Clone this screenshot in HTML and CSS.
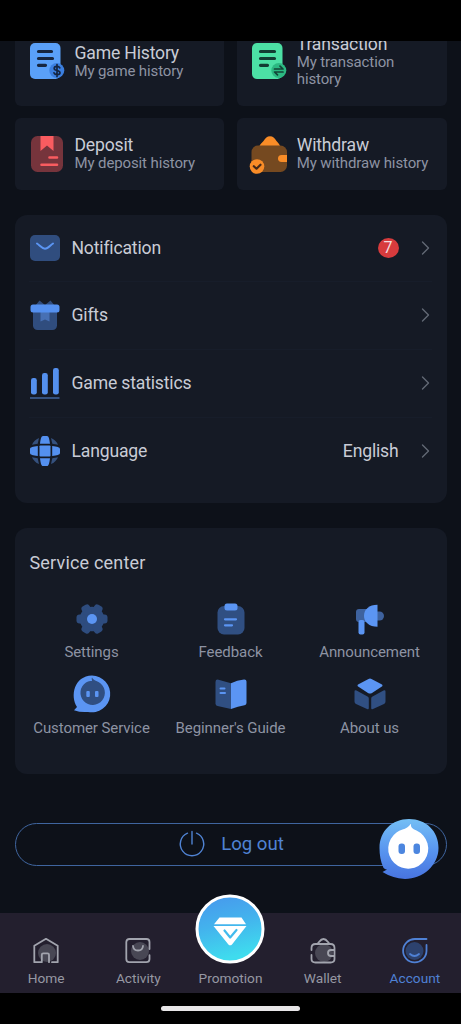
FILE: index.html
```html
<!DOCTYPE html>
<html lang="en">
<head>
<meta charset="utf-8">
<title>Account</title>
<link rel="stylesheet" href="styles.css">
</head>
<body>
<div class="screen">
  <div class="status-bar"></div>
  <main class="content">
    <section class="history">
      <a class="card tall">
        <svg class="card-icon" viewBox="0 0 40 40"><rect x="2" y="2" width="30.500" height="36" rx="5" fill="#5aa0f8"/><path d="M10.500 10.500h13M10.500 17.500h14M10.500 24.300h7" stroke="#17263f" stroke-width="3.200" stroke-linecap="round"/><circle cx="28.800" cy="29.500" r="7.500" fill="#3b7fe0"/><path d="M31.800 26.800c-1-2-5.600-2-5.600.6 0 2.600 5.800 1.600 5.800 4.300 0 2.500-5 2.500-6 .2M29 23.500v12" fill="none" stroke="#142541" stroke-width="1.700" stroke-linecap="round"/></svg>
        <div class="card-text"><h3>Game History</h3><p>My game history</p></div>
      </a>
      <a class="card tall">
        <svg class="card-icon" viewBox="0 0 40 40"><rect x="2" y="2" width="30.500" height="36" rx="5" fill="#4ce0a5"/><path d="M10.500 10.500h14M10.500 17.500h14M10.500 24.300h7" stroke="#133c33" stroke-width="3.200" stroke-linecap="round"/><circle cx="28.800" cy="29.500" r="7.500" fill="#2cb982"/><path d="M24.500 28h8.500l-3-2.800M33 31h-8.500l3 2.800" fill="none" stroke="#124437" stroke-width="1.700" stroke-linecap="round" stroke-linejoin="round"/></svg>
        <div class="card-text"><h3>Transaction</h3><p>My transaction history</p></div>
      </a>
      <a class="card">
        <svg class="card-icon" viewBox="0 0 40 40"><rect x="3" y="2" width="32" height="36" rx="6.500" fill="#76343c"/><path d="M12.500 2H25.500V17L19 11.500 12.500 17Z" fill="#fa5c60"/><path d="M21.500 23.500h7.500M13.500 30.700h15.500" stroke="#fa5c60" stroke-width="2.600" stroke-linecap="round"/></svg>
        <div class="card-text"><h3>Deposit</h3><p>My deposit history</p></div>
      </a>
      <a class="card">
        <svg class="card-icon" viewBox="1 0 40 40"><path d="M10.500 12c.5-2 2.500-3 4-5 2-3 3.500-4.800 6.500-4.800s4.500 1.800 6.500 4.800c1.500 2 3 3 3.500 5Z" fill="#f98c27"/><rect x="2.500" y="11.500" width="35.500" height="26.500" rx="6.500" fill="#754920"/><path d="M38 21h-5.500a3.500 3.500 0 0 0 0 7H38Z" fill="#f98c27"/><circle cx="8" cy="32.500" r="7.300" fill="#f98c27"/><path d="m4.800 32.200 2.700 2.500 4-4" fill="none" stroke="#442919" stroke-width="2.200" stroke-linecap="round" stroke-linejoin="round"/></svg>
        <div class="card-text"><h3>Withdraw</h3><p>My withdraw history</p></div>
      </a>
    </section>

    <section class="panel menu">
      <a class="menu-row">
        <svg class="menu-icon" viewBox="0 0 32 32"><rect x="1" y="3" width="30" height="26" rx="5" fill="#304d7e"/><path d="M8 11.500c3 2 5 5.200 8 5.200s5-3.200 8-5.200" fill="none" stroke="#5b95f3" stroke-width="2" stroke-linecap="round"/></svg>
        <span class="menu-label">Notification</span><span class="badge">7</span>
        <svg class="chevron" viewBox="0 0 10 16"><path d="m1.500 2 6 6-6 6"/></svg>
      </a>
      <a class="menu-row">
        <svg class="menu-icon" viewBox="0 0 32 32"><path d="M6 7 10.500 1.500 16 6l5.500-4.500L26 7Z" fill="#304d7e"/><path d="M4 9h24v17.500a4.500 4.500 0 0 1-4.500 4.500h-15A4.500 4.500 0 0 1 4 26.500Z" fill="#304d7e"/><path d="M11.500 12h9v10.500L16 20.500l-4.500 2Z" fill="#4770b4"/><rect x="1.500" y="5.500" width="29" height="8" rx="2.500" fill="#5490ef"/></svg>
        <span class="menu-label">Gifts</span>
        <svg class="chevron" viewBox="0 0 10 16"><path d="m1.500 2 6 6-6 6"/></svg>
      </a>
      <a class="menu-row">
        <svg class="menu-icon" viewBox="0 0 32 32"><g fill="#5490ef"><rect x="2" y="11" width="5.800" height="16.500" rx="2.300"/><rect x="13" y="6" width="5.800" height="21.500" rx="2.300"/><rect x="24" y="1" width="5.800" height="26.500" rx="2.300"/></g><rect x="1" y="30" width="29.500" height="2" fill="#35517e"/></svg>
        <span class="menu-label">Game statistics</span>
        <svg class="chevron" viewBox="0 0 10 16"><path d="m1.500 2 6 6-6 6"/></svg>
      </a>
      <a class="menu-row">
        <svg class="menu-icon" viewBox="0 0 32 32"><g fill="#5490ef"><rect x="10.500" y="10.500" width="11" height="11" rx=".8"/><path d="M11 8.800C11.600 4 12.200 1 14 1h4c1.800 0 2.400 3 3 7.800ZM11 23.200c.6 4.800 1.200 7.800 3 7.800h4c1.800 0 2.400-3 3-7.800ZM8.800 11C4 11.600 1 12.200 1 14v4c0 1.800 3 2.400 7.800 3ZM23.200 11c4.800.6 7.800 1.200 7.800 3v4c0 1.800-3 2.400-7.800 3Z"/></g><path d="M3 9.800Q5 5 10 3L8.700 8.700ZM29 9.800Q27 5 22 3L23.300 8.700ZM3 22.200Q5 27 10 29L8.700 23.300ZM29 22.200Q27 27 22 29L23.300 23.300Z" fill="#35517e"/></svg>
        <span class="menu-label">Language</span><span class="menu-value">English</span>
        <svg class="chevron" viewBox="0 0 10 16"><path d="m1.500 2 6 6-6 6"/></svg>
      </a>
    </section>

    <section class="panel service">
      <h2>Service center</h2>
      <div class="service-grid">
        <a class="service-item"><svg viewBox="0 0 40 40"><g fill="#2e4c7e"><circle cx="20" cy="20" r="12.300"/><rect x="4.500" y="15.500" width="31" height="9" rx="3"/><rect x="4.500" y="15.500" width="31" height="9" rx="3" transform="rotate(60 20 20)"/><rect x="4.500" y="15.500" width="31" height="9" rx="3" transform="rotate(120 20 20)"/></g><circle cx="20" cy="20" r="5" fill="#5b95f3"/></svg><span>Settings</span></a>
        <a class="service-item"><svg viewBox="0 0 40 40"><rect x="6.500" y="7" width="27" height="28.500" rx="6.500" fill="#304f82"/><rect x="13.500" y="4.500" width="13" height="7" rx="2.500" fill="#5b95f3"/><path d="M14 20.300h11M14 26.300h7" stroke="#5b95f3" stroke-width="2.200" stroke-linecap="round"/></svg><span>Feedback</span></a>
        <a class="service-item"><svg viewBox="0 0 40 40"><path d="M6 13q0-3 3-3h8v13H9q-3 0-3-3Z" fill="#3e629e"/><path d="M27 12.500h2.500a4 4 0 0 1 0 9H27Z" fill="#3e629e"/><path d="M27.500 5.700v22C19 27.700 14 23 14 16.700S19 5.700 27.500 5.700Z" fill="#5b95f3"/><rect x="8.500" y="21" width="6" height="14.500" rx="2" fill="#5b95f3"/></svg><span>Announcement</span></a>
        <a class="service-item"><svg viewBox="0 0 40 40"><path d="M20 1.500A18.400 18.400 0 1 1 16 37.900Q9 38.700 2 36.200L5 33C-2 22 2 2 20 1.500Z" fill="#5b95f3"/><path d="M20 7c0-1.500-.7-2.800 0-3.500 1.500 3 5 3.500 6.500 4.500A12.200 12.200 0 1 1 14 8.500C16 7.200 18 7 20 7Z" fill="#304f82"/><rect x="14.300" y="17" width="3.500" height="6" rx="1" fill="#5b95f3"/><rect x="23" y="17" width="3.500" height="6" rx="1" fill="#5b95f3"/></svg><span>Customer Service</span></a>
        <a class="service-item"><svg viewBox="0 0 40 40"><path d="M20 9.300 7.500 5.700Q4.500 5 4.500 8v21.500q0 2 2 2.500L20 35Z" fill="#304f82"/><path d="M20 9.300q6-3 13-3.800 2.500-.2 2.500 2V29q0 2-2 2.300Q27 32.500 20 35Z" fill="#5b95f3"/><path d="M9.500 14.500h4M9.500 19h4.500" stroke="#5b95f3" stroke-width="2" stroke-linecap="round"/></svg><span>Beginner's Guide</span></a>
        <a class="service-item"><svg viewBox="0 0 40 40"><path d="M18.500 5q1.500-.8 3 0l10 5.200q2 1.200 0 2.600l-9.500 6.200q-2 1.200-4 0L8.500 12.800q-2-1.400 0-2.600Z" fill="#5b95f3"/><path d="m6.500 16.500 11 6q1.300.7 1.300 2V34q0 2-1.800 1L6 30q-1.500-.8-1.500-2.500V17.500q0-2 2-1ZM33.500 16.500l-11 6q-1.300.7-1.300 2V34q0 2 1.800 1L34 30q1.500-.8 1.500-2.500V17.500q0-2-2-1Z" fill="#304f82"/></svg><span>About us</span></a>
      </div>
    </section>

    <div class="logout-wrap">
      <button class="logout">
        <svg viewBox="0 0 28 28"><path d="M18.500 3.200a11.700 11.700 0 1 1-9 0M14 1.500V14"/></svg>
        <span>Log out</span>
      </button>
      <svg class="chat-bubble" viewBox="0 0 62 62">
        <defs><linearGradient id="bubble" x1="0" y1="0" x2="0" y2="1"><stop offset="0" stop-color="#74bff5"/><stop offset=".55" stop-color="#5793ef"/><stop offset="1" stop-color="#4874df"/></linearGradient></defs>
        <path d="M31 1C48 1 60.500 13 60.500 30S45 61 27 61Q14 60 4.500 54L9 51.500Q5.500 51 5 48.500 1.500 41 1.500 30C1.500 13 14 1 31 1Z" fill="url(#bubble)"/>
        <path d="M24.500 11.500q5-1.300 8.500-5.800-1 4.500 5.500 6.800A20 20 0 1 1 18.500 14.500Q21 12.500 24.500 11.500Z" fill="#fff"/>
        <rect x="20.500" y="25.500" width="6.500" height="10.500" rx="3" fill="#4c86df"/><rect x="35.500" y="25.500" width="6.500" height="10.500" rx="3" fill="#4c86df"/>
      </svg>
    </div>
  </main>

  <nav class="tabs">
    <a class="tab"><svg viewBox="0 0 30 30"><circle cx="16" cy="17" r="9" fill="#484754"/><path d="M21 26.200h5.700V9.800L15 2.800 3.300 9.800v16.400h7.500v-7.400q0-1.500 1.500-1.500h4.200q1.500 0 1.500 1.500v7.400"/></svg><span>Home</span></a>
    <a class="tab"><svg viewBox="0 0 30 30"><circle cx="17" cy="15" r="9" fill="#484754"/><path d="M26.500 13V6q0-3-3-3h-17q-3 0-3.200 3v17q0 3.200 3 3.200h17q3 0 3.200-3v-4M10 10c.5 6 9.500 6 10 0"/></svg><span>Activity</span></a>
    <a class="tab promotion">
      <svg viewBox="0 0 70 70"><defs><linearGradient id="promo" x1="0" y1="0" x2=".25" y2="1"><stop offset="0" stop-color="#4796ed"/><stop offset=".5" stop-color="#43b3ed"/><stop offset="1" stop-color="#3fdcee"/></linearGradient></defs><circle cx="35" cy="35" r="33" fill="url(#promo)" stroke="#fff" stroke-width="3"/><path d="M24.500 23.500h22l4.500 6.700H19ZM18.500 32h33L37 50.500q-1.800 1.700-3.600 0Z" fill="#fff"/><path d="m29.500 36.500 5.700 7 6.300-7.500" fill="none" stroke="#42bbed" stroke-width="2.200"/></svg>
      <span>Promotion</span></a>
    <a class="tab"><svg viewBox="0 0 30 30"><circle cx="16" cy="17" r="9" fill="#484754"/><path d="M3.500 14v-2q0-4 4-4h15q4 0 4 4v11q0 3.500-4 3.500h-15q-4 0-4-3.500v-4M9 8c2-1 3-5 6.500-5S20 7 22 8M26.500 14H23a3 3 0 0 0 0 6h3.500"/></svg><span>Wallet</span></a>
    <a class="tab active"><svg viewBox="0 0 30 30"><circle cx="14.500" cy="15" r="9" fill="#2d426e"/><path d="M26.500 3H15A11.700 11.700 0 1 0 26.500 15V9M10 18q4.500 4 9 0"/></svg><span>Account</span></a>
  </nav>
  <div class="gesture-area"><div class="gesture-handle"></div></div>
</div>
</body>
</html>
```
FILE: styles.css
```css
* { box-sizing: border-box; }
body { margin: 0; background: #000; font-family: Roboto, sans-serif; }
h2, h3, p { margin: 0; font-weight: 400; }
svg { display: block; flex: none; overflow: visible; }
.screen { width: 461px; height: 1024px; display: flex; flex-direction: column; background: #0d1119; overflow: hidden; }
.status-bar { height: 41px; flex: none; background: #000; }
.content { height: 872px; flex: none; overflow: hidden; padding: 0 14.5px; }

.history { margin-top: -24px; display: grid; grid-template-columns: 1fr 1fr; gap: 12.5px; }
.card { height: 72px; display: flex; align-items: center; gap: 7px; padding: 0 12px 0 13px; border-radius: 6px; background: #151a25; }
.card.tall { height: 88.5px; }
.card-icon { width: 40px; height: 40px; }
.card-text { flex: 1; margin-right: -6px; }
.card h3 { font-size: 17.6px; line-height: 20px; letter-spacing: -.18px; color: #c9ccd6; }
.card p { font-size: 15px; line-height: 17.5px; letter-spacing: -.12px; color: #8d93a3; }

.panel { border-radius: 12px; background: #151a25; }
.menu { margin-top: 25px; height: 288px; padding: 0 15px 0 14px; }
.menu-row { height: 67.8px; display: flex; align-items: center; border-bottom: 1px solid #171d2a; font-size: 17.6px; letter-spacing: -.18px; color: #c9ccd6; }
.menu-row:first-child { height: 67px; }
.menu-row:last-child { border-bottom: 0; }
.menu-icon { width: 32px; height: 32px; margin-right: 11px; }
.menu-label { flex: 1; }
.menu-value { margin-right: 22px; }
.badge { width: 21px; height: 20px; margin-right: 22px; border-radius: 50%; background: #d73b3d; color: #f3dcdf; font-size: 16px; line-height: 20px; text-align: center; }
.chevron { width: 10px; height: 16px; margin-right: 1px; fill: none; stroke: #626875; stroke-width: 1.4; stroke-linecap: round; stroke-linejoin: round; }

.service { margin-top: 25px; height: 246px; padding: 22.5px 7.5px 0; }
.service h2 { padding-left: 7.5px; font-size: 18px; line-height: 24px; letter-spacing: .18px; color: #c9ccd6; }
.service-grid { margin-top: 24.5px; display: grid; grid-template-columns: repeat(3, 1fr); row-gap: 1px; }
.service-item { height: 73.5px; display: flex; flex-direction: column; align-items: center; white-space: nowrap; font-size: 15px; letter-spacing: -.08px; color: #8d93a3; }
.service-item svg { width: 40px; height: 40px; }
.service-item span { margin-top: 4px; line-height: 18px; }
.service-item:nth-child(n+4) span { margin-top: 5px; }

.logout-wrap { position: relative; margin-top: 48.5px; }
.logout { width: 100%; height: 43.5px; display: flex; align-items: center; justify-content: center; gap: 15px; padding: 0 0 0 1px; border: 1px solid #3f659f; border-radius: 22px; background: none; font: 18.6px Roboto, sans-serif; color: #5083d3; }
.logout svg { width: 28px; height: 28px; fill: none; stroke: #5083d3; stroke-width: 1.4; stroke-linecap: round; }
.chat-bubble { position: absolute; right: 7px; top: -5px; width: 62px; height: 62px; }

.tabs { height: 80px; flex: none; display: grid; grid-template-columns: repeat(5, 1fr); grid-template-rows: 80px; background: #231f2e; }
.tab { min-height: 0; display: flex; flex-direction: column; align-items: center; justify-content: flex-end; padding-bottom: 6px; font-size: 13.7px; line-height: 18px; color: #9698a3; }
.tab svg { width: 30px; height: 30px; margin-bottom: 3px; fill: none; stroke: #a2a4ae; stroke-width: 1.8; stroke-linecap: round; stroke-linejoin: round; }
.tab svg circle { stroke: none; }
.tab.active { color: #4f81d5; }
.tab.active svg { stroke: #4f81d5; }
.tab.promotion svg { width: 70px; height: 70px; margin-bottom: 5px; stroke: none; }
.tab.promotion svg circle { stroke: #fff; }
.gesture-area { flex: 1; display: flex; justify-content: center; padding-top: 13px; background: #000; }
.gesture-handle { width: 139px; height: 5px; border-radius: 3px; background: #e8e6e8; }
```
